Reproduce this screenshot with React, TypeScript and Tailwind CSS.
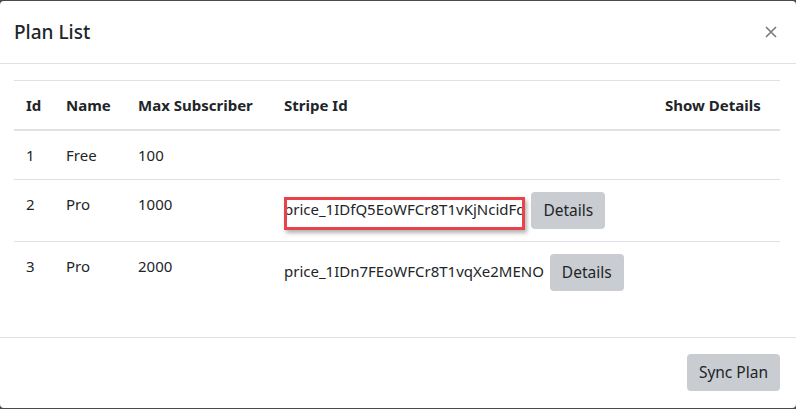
import React from "react";

type Plan = {
  id: number;
  name: string;
  maxSubscriber: number;
  stripeId?: string;
};

const plans: Plan[] = [
  { id: 1, name: "Free", maxSubscriber: 100 },
  { id: 2, name: "Pro", maxSubscriber: 1000, stripeId: "price_1IDfQ5EoWFCr8T1vKjNcidFd" },
  { id: 3, name: "Pro", maxSubscriber: 2000, stripeId: "price_1IDn7FEoWFCr8T1vqXe2MENO" },
];

const App: React.FC = () => {
  return (
    <div
      className="w-[796px] h-[409px] bg-[#4a4a4a] overflow-hidden text-[#212529]"
      style={{ fontFamily: '"Noto Sans", "Open Sans", sans-serif' }}
    >
      <div className="mt-px h-[407px] bg-white rounded-[4px] flex flex-col">
        {/* Header */}
        <div className="h-[63px] shrink-0 flex items-center justify-between pl-[14px] pr-[19px] border-b border-[#dee2e6]">
          <h5 className="text-[19px] leading-[30px] font-medium">Plan List</h5>
          <svg width="12" height="12" viewBox="0 0 12 12" className="text-[#7a7a7a]">
            <path d="M1 1 L11 11 M11 1 L1 11" stroke="currentColor" strokeWidth="1.6" />
          </svg>
        </div>

        {/* Body */}
        <div className="flex-1 pl-[14px] pr-[16px] pt-[16px]">
          <table className="w-full table-fixed border-collapse text-[15px] leading-[24px]">
            <thead>
              <tr className="border-t border-[#dee2e6] border-b-2 border-b-[#dee2e6] text-left whitespace-nowrap">
                <th className="w-[40px] p-[12px] font-bold">Id</th>
                <th className="w-[72px] p-[12px] font-bold">Name</th>
                <th className="w-[146px] p-[12px] font-bold">Max Subscriber</th>
                <th className="w-[381px] p-[12px] font-bold">Stripe Id</th>
                <th className="p-[12px] font-bold">Show Details</th>
              </tr>
            </thead>
            <tbody>
              {plans.map((plan) => (
                <tr key={plan.id} className="border-b border-[#dee2e6] last:border-b-0 align-top">
                  <td className="p-[12px]">{plan.id}</td>
                  <td className="p-[12px]">{plan.name}</td>
                  <td className="p-[12px]">{plan.maxSubscriber}</td>
                  <td className="p-[12px] relative whitespace-nowrap">
                    {plan.stripeId && (
                      <>
                        <span>{plan.stripeId}</span>{" "}
                        <button className="ml-[2px] bg-[#c9cdd1] rounded-[4px] px-[12px] py-[6px] leading-[25px] text-[15.5px] align-middle">
                          Details
                        </button>
                      </>
                    )}
                    {plan.id === 2 && (
                      <div className="absolute left-[12px] top-[17px] w-[241px] h-[33px] border-[3px] border-[#e8434b] shadow-[2px_3px_4px_rgba(0,0,0,0.3)]" />
                    )}
                  </td>
                  <td className="p-[12px]"></td>
                </tr>
              ))}
            </tbody>
          </table>
        </div>

        {/* Footer */}
        <div className="h-[71px] shrink-0 border-t border-[#dee2e6] flex items-start justify-end pt-[16px] pr-[16px]">
          <button className="bg-[#c9cdd1] rounded-[4px] px-[12px] py-[6px] text-[15.5px] leading-[25px]">
            Sync Plan
          </button>
        </div>
      </div>
    </div>
  );
};

export default App;
